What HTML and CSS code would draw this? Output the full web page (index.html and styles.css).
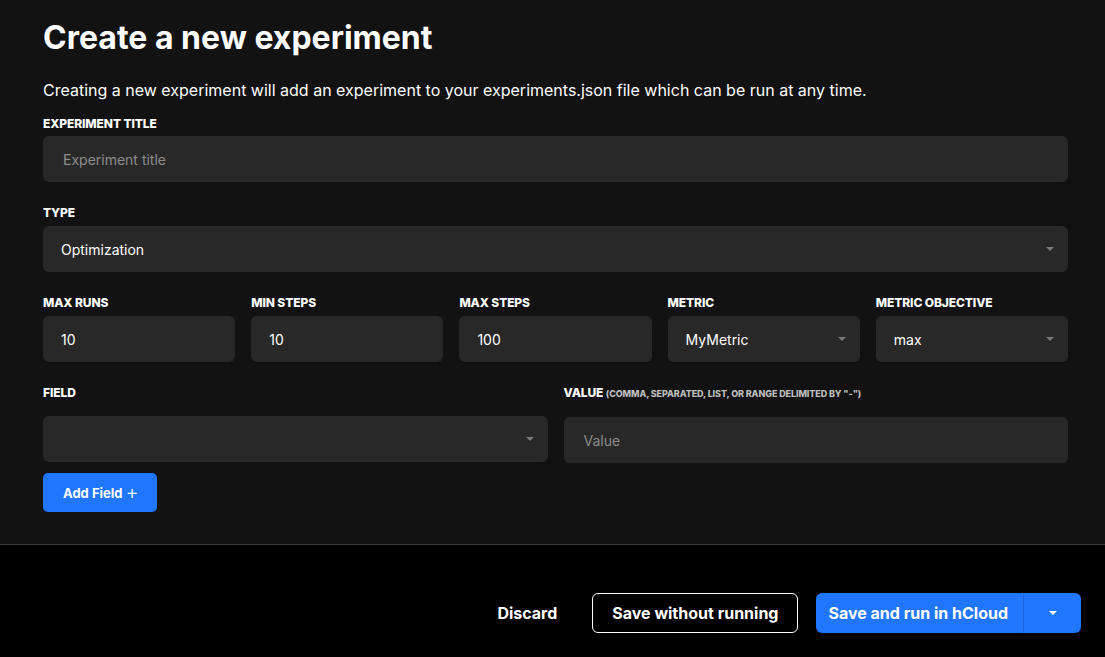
FILE: index.html
```html
<!DOCTYPE html>
<html lang="en">
<head>
<meta charset="utf-8">
<title>Create a new experiment</title>
<link rel="stylesheet" href="styles.css">
</head>
<body>
<div class="page">
  <main class="content">
    <h1 class="title">Create a new experiment</h1>
    <p class="desc">Creating a new experiment will add an experiment to your experiments.json file which can be run at any time.</p>

    <div class="group">
      <label class="label">Experiment title</label>
      <div class="input placeholder">Experiment title</div>
    </div>

    <div class="group">
      <label class="label">Type</label>
      <div class="input select">Optimization<span class="caret"></span></div>
    </div>

    <div class="group row5">
      <div class="col">
        <label class="label">Max runs</label>
        <div class="input">10</div>
      </div>
      <div class="col">
        <label class="label">Min steps</label>
        <div class="input">10</div>
      </div>
      <div class="col">
        <label class="label">Max steps</label>
        <div class="input">100</div>
      </div>
      <div class="col">
        <label class="label">Metric</label>
        <div class="input select">MyMetric<span class="caret"></span></div>
      </div>
      <div class="col">
        <label class="label">Metric objective</label>
        <div class="input select">max<span class="caret"></span></div>
      </div>
    </div>

    <div class="row2">
      <div class="col">
        <label class="label tall">Field</label>
        <div class="input select"><span class="caret"></span></div>
      </div>
      <div class="col">
        <label class="label tall">Value <span class="hint">(comma, separated, list, or range delimited by "-")</span></label>
        <div class="input placeholder">Value</div>
      </div>
    </div>

    <button class="btn-add">Add Field <span class="plus">+</span></button>
  </main>

  <footer class="footer">
    <button class="btn-text">Discard</button>
    <button class="btn-outline">Save without running</button>
    <div class="btn-split">
      <button class="split-main">Save and run in hCloud</button>
      <button class="split-arrow"><span class="caret white"></span></button>
    </div>
  </footer>
</div>
</body>
</html>
```

FILE: styles.css
```css
* { box-sizing: border-box; }
html, body { margin: 0; padding: 0; }
body {
  background: #000;
  color: #fff;
  font-family: Inter, "Noto Sans", "Liberation Sans", sans-serif;
  width: 1105px;
  height: 657px;
  overflow: hidden;
}
.page {
  display: flex;
  flex-direction: column;
  height: 657px;
}
.content {
  background: #121212;
  padding: 18px 37px 32px 43px;
  display: flex;
  flex-direction: column;
  border-bottom: 1px solid #3a3a3a;
}
.title {
  margin: 0;
  font-size: 32px;
  line-height: 40px;
  font-weight: 700;
}
.desc {
  margin: 22px 0 16px;
  font-size: 16px;
  line-height: 20px;
  font-weight: 400;
}
.group { margin-bottom: 23px; }
.label {
  display: block;
  font-size: 12px;
  line-height: 16px;
  font-weight: 800;
  text-transform: uppercase;
  margin-bottom: 5px;
  letter-spacing: -0.1px;
}
.group:first-of-type .label { margin-bottom: 4px; }
.label.tall { margin-bottom: 15px; }
.hint {
  font-size: 9px;
  color: #bdbdbd;
  font-weight: 800;
}
.input {
  position: relative;
  height: 46px;
  background: #282828;
  border-radius: 6px;
  padding: 0 18px;
  display: flex;
  align-items: center;
  font-size: 14px;
  color: #fff;
}
.input.placeholder { color: #8c8c8c; padding-left: 20px; }
.caret {
  position: absolute;
  right: 14px;
  top: 50%;
  margin-top: -2px;
  width: 0;
  height: 0;
  border-left: 4px solid transparent;
  border-right: 4px solid transparent;
  border-top: 4px solid #7a7a7a;
}
.caret.white {
  position: static;
  margin: 0;
  border-top-color: #fff;
}
.row5 {
  display: grid;
  grid-template-columns: repeat(5, 1fr);
  gap: 16px;
}
.row2 {
  display: grid;
  grid-template-columns: 1fr 1fr;
  gap: 16px;
  margin-bottom: 10px;
}
.btn-add {
  align-self: flex-start;
  height: 39px;
  padding: 0 18px 0 20px;
  background: #2176ff;
  border: none;
  border-radius: 5px;
  color: #fff;
  font-family: inherit;
  font-size: 13px;
  font-weight: 700;
  display: flex;
  align-items: center;
  gap: 3px;
}
.plus { font-weight: 300; font-size: 20px; line-height: 1; margin-top: -2px; }
.footer {
  flex: 1;
  background: #000;
  display: flex;
  justify-content: flex-end;
  align-items: flex-start;
  padding: 48px 24px 0 0;
  gap: 18px;
}
.footer button { font-family: inherit; }
.btn-text {
  background: none;
  border: none;
  color: #fff;
  font-size: 16px;
  font-weight: 700;
  height: 40px;
  padding: 0 17px;
}
.btn-outline {
  background: #000;
  border: 1px solid #fff;
  border-radius: 6px;
  color: #fff;
  font-size: 16px;
  font-weight: 700;
  height: 40px;
  padding: 0 19px;
}
.btn-split {
  display: flex;
  height: 40px;
  background: #2176ff;
  border-radius: 6px;
}
.split-main {
  background: none;
  border: none;
  color: #fff;
  font-size: 16px;
  font-weight: 700;
  padding: 0 15px 0 12px;
  border-right: 1px solid #1b64da;
}
.split-arrow {
  background: none;
  border: none;
  width: 57px;
  display: flex;
  align-items: center;
  justify-content: center;
}
```
